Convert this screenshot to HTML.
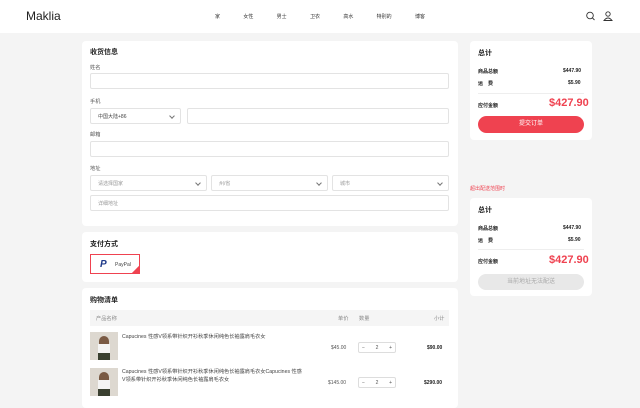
<!DOCTYPE html><html><head><meta charset="utf-8"><style>
*{box-sizing:border-box;margin:0;padding:0}
body{width:640px;height:403px;overflow:hidden;background:#f4f4f4;font-family:"Liberation Sans","Noto Sans CJK SC",sans-serif;color:#222;position:relative}
.a{position:absolute}
.card{position:absolute;background:#fff;border-radius:4px}
.t{font-size:7px;font-weight:bold}
.l{font-size:5.2px;color:#555}
.in{position:absolute;border:1px solid #e3e3e3;border-radius:2px;background:#fff;font-size:5px;color:#999;padding-left:7px;display:flex;align-items:center}
.ch{position:absolute;right:6px;top:5px;width:4px;height:4px;border-right:1px solid #777;border-bottom:1px solid #777;transform:rotate(45deg)}
.s{font-size:5px}
.b{font-weight:bold}
</style></head><body>
<div class="a" style="left:0;top:0;width:640px;height:33px;background:#fff"></div>
<div class="a" style="left:26px;top:9px;font-size:12px;font-weight:normal;letter-spacing:0px;color:#222">Maklia</div>
<div class="a s" style="top:13px;left:215px;width:210px;display:flex;justify-content:space-between;color:#333"><span>家</span><span>女性</span><span>男士</span><span>卫衣</span><span>高水</span><span>特别的</span><span>博客</span></div>
<svg class="a" style="left:585px;top:11px" width="28" height="10"><circle cx="5" cy="4.5" r="3.3" fill="none" stroke="#333" stroke-width="0.9"/><line x1="7.5" y1="7" x2="9.5" y2="9" stroke="#333" stroke-width="0.9"/><circle cx="23" cy="3" r="2.2" fill="none" stroke="#333" stroke-width="0.9"/><path d="M19 9.5 Q23 4.5 27 9.5 Z" fill="none" stroke="#333" stroke-width="0.9"/></svg>

<div class="card" style="left:82px;top:41px;width:376px;height:185px"></div>
<div class="a t" style="left:90px;top:47px">收货信息</div>
<div class="a l" style="left:90px;top:64px">姓名</div>
<div class="in" style="left:90px;top:73px;width:359px;height:16px"></div>
<div class="a l" style="left:90px;top:98px">手机</div>
<div class="in" style="left:90px;top:108px;width:91px;height:16px;color:#444">中国大陆+86<i class="ch"></i></div>
<div class="in" style="left:187px;top:108px;width:262px;height:16px"></div>
<div class="a l" style="left:90px;top:131px">邮箱</div>
<div class="in" style="left:90px;top:141px;width:359px;height:16px"></div>
<div class="a l" style="left:90px;top:165px">地址</div>
<div class="in" style="left:90px;top:175px;width:117px;height:16px">请选择国家<i class="ch"></i></div>
<div class="in" style="left:211px;top:175px;width:117px;height:16px">州/省<i class="ch"></i></div>
<div class="in" style="left:332px;top:175px;width:117px;height:16px">城市<i class="ch"></i></div>
<div class="in" style="left:90px;top:195px;width:359px;height:16px">详细地址</div>

<div class="card" style="left:82px;top:232px;width:376px;height:50px"></div>
<div class="a t" style="left:90px;top:239px">支付方式</div>
<div class="a" style="left:90px;top:254px;width:50px;height:20px;border:1px solid #ef4250;overflow:hidden">
<div class="a" style="left:9px;top:4px;font-size:10px;font-weight:bold;font-style:italic;color:#1f3a8a">P</div>
<div class="a s" style="left:24px;top:7px;color:#444">PayPal</div>
<div class="a" style="right:-5px;bottom:-5px;width:10px;height:10px;background:#ef4250;transform:rotate(45deg)"></div></div>

<div class="card" style="left:82px;top:288px;width:376px;height:120px"></div>
<div class="a t" style="left:90px;top:295px">购物清单</div>
<div class="a" style="left:90px;top:310px;width:359px;height:16px;background:#f5f5f5"></div>
<div class="a l" style="left:96px;top:315px;color:#888">产品名称</div>
<div class="a l" style="left:338px;top:315px;color:#888">单价</div>
<div class="a l" style="left:359px;top:315px;color:#888">数量</div>
<div class="a l" style="left:434px;top:315px;color:#888">小计</div>

<div class="a" style="left:90px;top:332px;width:28px;height:28px;background:#ddd8d0"><div class="a" style="left:9px;top:4px;width:10px;height:24px;border-radius:5px 5px 0 0;background:#7a5a44"></div><div class="a" style="left:8px;top:12px;width:12px;height:9px;background:#f4f4f4"></div><div class="a" style="left:8px;top:21px;width:12px;height:7px;background:#3a4030"></div></div>
<div class="a" style="left:122px;top:333px;font-size:5.2px;color:#444;width:200px">Capucines 性感V领系带针织开衫秋季休闲纯色长袖露肩毛衣女</div>
<div class="a s" style="left:331px;top:345px;color:#555">$45.00</div>
<div class="a" style="left:358px;top:342px;width:38px;height:11px;border:1px solid #ddd;border-radius:2px;font-size:5px;color:#555;display:flex;justify-content:space-between;align-items:center;padding:0 3px"><span>−</span><span>2</span><span>+</span></div>
<div class="a s b" style="left:427px;top:345px">$90.00</div>

<div class="a" style="left:90px;top:368px;width:28px;height:28px;background:#ddd8d0"><div class="a" style="left:9px;top:4px;width:10px;height:24px;border-radius:5px 5px 0 0;background:#7a5a44"></div><div class="a" style="left:8px;top:12px;width:12px;height:9px;background:#f4f4f4"></div><div class="a" style="left:8px;top:21px;width:12px;height:7px;background:#3a4030"></div></div>
<div class="a" style="left:122px;top:368px;font-size:5.2px;color:#444;width:180px;line-height:8px">Capucines 性感V领系带针织开衫秋季休闲纯色长袖露肩毛衣女Capucines 性感V领系带针织开衫秋季休闲纯色长袖露肩毛衣女</div>
<div class="a s" style="left:328px;top:380px;color:#555">$145.00</div>
<div class="a" style="left:358px;top:377px;width:38px;height:11px;border:1px solid #ddd;border-radius:2px;font-size:5px;color:#555;display:flex;justify-content:space-between;align-items:center;padding:0 3px"><span>−</span><span>2</span><span>+</span></div>
<div class="a s b" style="left:424px;top:380px">$290.00</div>

<div class="card" style="left:470px;top:41px;width:122px;height:99px"></div>
<div class="a t" style="left:478px;top:48px">总计</div>
<div class="a s b" style="left:478px;top:68px">商品总额</div><div class="a s b" style="left:563px;top:68px">$447.90</div>
<div class="a s b" style="left:478px;top:80px">运　费</div><div class="a s b" style="left:568px;top:80px">$5.90</div>
<div class="a" style="left:478px;top:93px;width:106px;height:1px;background:#eee"></div>
<div class="a s b" style="left:478px;top:102px">应付金额</div>
<div class="a" style="left:549px;top:97px;font-size:11px;font-weight:bold;color:#ef4250">$427.90</div>
<div class="a" style="left:478px;top:116px;width:106px;height:17px;border-radius:9px;background:#ef4250;color:#fff;font-size:6px;text-align:center;line-height:17px">提交订单</div>

<div class="a" style="left:470px;top:185px;font-size:5px;color:#ef4250">超出配送范围时</div>
<div class="card" style="left:470px;top:198px;width:122px;height:98px"></div>
<div class="a t" style="left:478px;top:205px">总计</div>
<div class="a s b" style="left:478px;top:225px">商品总额</div><div class="a s b" style="left:563px;top:225px">$447.90</div>
<div class="a s b" style="left:478px;top:237px">运　费</div><div class="a s b" style="left:568px;top:237px">$5.90</div>
<div class="a" style="left:478px;top:249px;width:106px;height:1px;background:#eee"></div>
<div class="a s b" style="left:478px;top:258px">应付金额</div>
<div class="a" style="left:549px;top:254px;font-size:11px;font-weight:bold;color:#ef4250">$427.90</div>
<div class="a" style="left:478px;top:274px;width:106px;height:16px;border-radius:8px;background:#e8e8e8;color:#aaa;font-size:6px;text-align:center;line-height:16px">当前地址无法配送</div>
</body></html>
